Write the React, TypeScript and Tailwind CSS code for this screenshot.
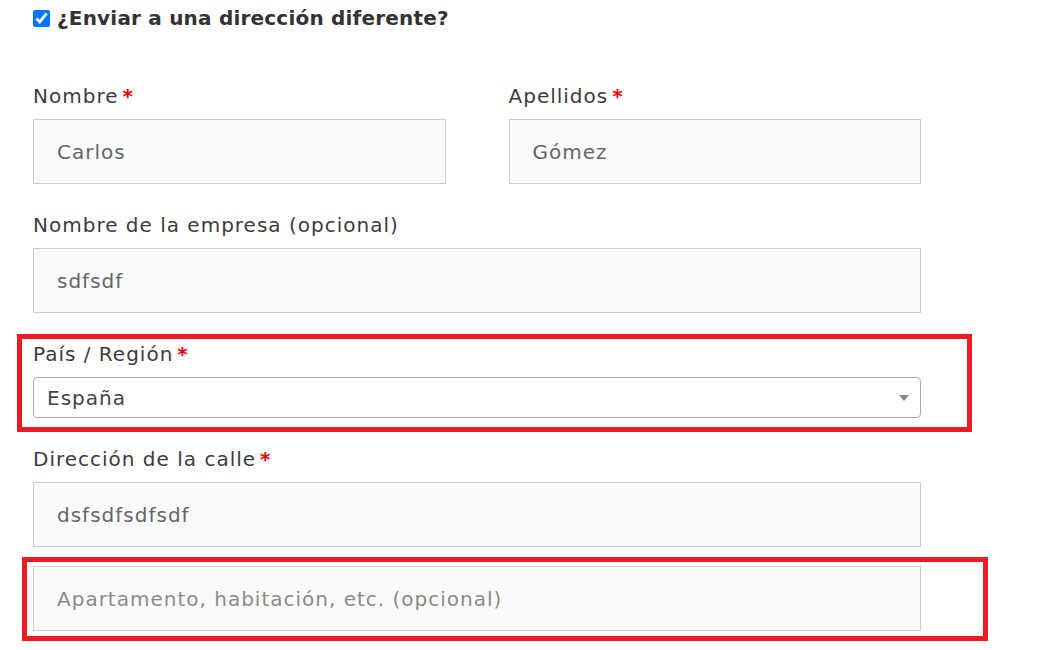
const font = { fontFamily: '"DejaVu Sans", "Noto Sans", sans-serif' };

const Label = ({ text, required }: { text: string; required?: boolean }) => (
  <label className="block text-[20px] leading-[24px] tracking-[1px] text-[#3c3c3c] mb-[11px]">
    {text}
    {required && <span className="ml-[4px] font-bold text-[#e00]">*</span>}
  </label>
);

const Field = ({ value, placeholder }: { value?: string; placeholder?: string }) => (
  <div className="h-[65px] flex items-center border border-[#cccccc] bg-[#fafafa] pl-[23px] text-[20px] tracking-[1px]">
    {value ? (
      <span className="text-[#666]">{value}</span>
    ) : (
      <span className="text-[#8a8a8a]">{placeholder}</span>
    )}
  </div>
);

export default function App() {
  return (
    <div className="min-h-[650px] bg-white" style={font}>
      <div className="w-[888px] ml-[33px]">
        <div className="h-[36px] flex items-center gap-[7px]">
          <input type="checkbox" defaultChecked className="w-[17px] h-[17px] m-0" />
          <h3 className="text-[20px] font-bold tracking-[0.2px] text-[#333]">¿Enviar a una dirección diferente?</h3>
        </div>

        <div className="grid grid-cols-2 gap-x-[63px] mt-[48px]">
          <div>
            <Label text="Nombre" required />
            <Field value="Carlos" />
          </div>
          <div>
            <Label text="Apellidos" required />
            <Field value="Gómez" />
          </div>
        </div>

        <div className="mt-[29px]">
          <Label text="Nombre de la empresa (opcional)" />
          <Field value="sdfsdf" />
        </div>

        <div className="mt-[21px] ml-[-16px] mr-[-51px] border-[5px] border-[#ed1c24] pl-[11px] pr-[46px] pt-[3px] pb-[9px]">
          <Label text="País / Región" required />
          <div className="h-[41px] flex items-center justify-between border border-[#aaaaaa] rounded-[4px] pl-[13px] pr-[11px] text-[20px] tracking-[1px] text-[#444]">
            <span>España</span>
            <span className="w-0 h-0 border-x-[5px] border-x-transparent border-t-[6px] border-t-[#888]" />
          </div>
        </div>

        <div className="mt-[15px]">
          <Label text="Dirección de la calle" required />
          <Field value="dsfsdfsdfsdf" />
        </div>

        <div className="mt-[10px] ml-[-11px] mr-[-67px] border-[5px] border-[#ed1c24] pl-[6px] pr-[62px] pt-[4px] pb-[5px]">
          <Field placeholder="Apartamento, habitación, etc. (opcional)" />
        </div>
      </div>
    </div>
  );
}
